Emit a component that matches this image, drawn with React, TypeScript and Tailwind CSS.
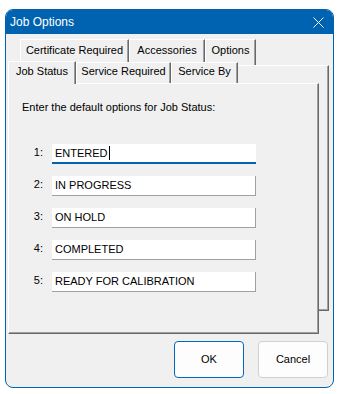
import React from "react";

const font = { fontFamily: '"Liberation Sans", Arial, sans-serif' };

const backTabs = [
  { label: "Certificate Required", w: "w-[109px]" },
  { label: "Accessories", w: "w-[76px]" },
  { label: "Options", w: "w-[51px]" },
];

const statuses = ["ENTERED", "IN PROGRESS", "ON HOLD", "COMPLETED", "READY FOR CALIBRATION"];

function StatusRow({ n, value, focused }: { n: number; value: string; focused?: boolean }) {
  return (
    <div className="flex items-start">
      <div className="w-[35px] pr-[1px] pt-[2px] text-right leading-[13px]">{n}:</div>
      <div
        className={
          focused
            ? "ml-[8px] flex h-[20px] w-[204px] items-center bg-white pl-[3px] border-b-2 border-b-[#0063b1]"
            : "ml-[8px] flex h-[20px] w-[204px] items-center bg-white pl-[3px] border-b border-r border-[#a0a0a0]"
        }
      >
        <span className="leading-[13px]">{value}</span>
        {focused && <span className="ml-[1px] h-[14px] w-px bg-black" />}
      </div>
    </div>
  );
}

export default function App() {
  return (
    <div className="pl-[5px] pt-[9px] text-[11px] text-black" style={font}>
      <div className="flex h-[379px] w-[329px] flex-col overflow-hidden rounded-[8px] border border-[#0063b1] bg-[#f0f0f0]">
        {/* title bar */}
        <div className="flex h-[24px] items-center justify-between bg-[#0063b1] pl-[4px] pr-[9px] text-white">
          <span className="text-[12px] leading-[14px]">Job Options</span>
          <svg width="11" height="11" viewBox="0 0 11 11">
            <path d="M0.5 0.5 L10.5 10.5 M10.5 0.5 L0.5 10.5" stroke="white" strokeWidth="1" />
          </svg>
        </div>

        {/* back tab row */}
        <div className="flex pl-[14px] pt-[5px]">
          {backTabs.map((t) => (
            <div
              key={t.label}
              className={`${t.w} h-[26px] border-l border-t border-white border-r border-r-[#696969] bg-[#f0f0f0] pt-[4px] text-center leading-[13px] shadow-[inset_-1px_0_0_#a0a0a0]`}
            >
              {t.label}
            </div>
          ))}
        </div>

        {/* back page */}
        <div className="ml-[2px] mr-[4px] border-t border-t-white border-r border-b border-r-[#696969] border-b-[#696969] pr-[9px] shadow-[inset_-1px_-1px_0_#a0a0a0]">
          {/* front tab row */}
          <div className="-mt-[5px] flex h-[22px] items-end">
            <div className="relative mb-[-1px] h-[23px] w-[68px] border-l border-t border-white border-r border-r-[#696969] bg-[#f0f0f0] pt-[3px] text-center leading-[13px] shadow-[inset_-1px_0_0_#a0a0a0]">
              Job Status
            </div>
            <div className="h-[21px] w-[95px] border-l border-t border-white border-r border-r-[#696969] bg-[#f0f0f0] pt-[2px] text-center leading-[13px] shadow-[inset_-1px_0_0_#a0a0a0]">
              Service Required
            </div>
            <div className="h-[21px] w-[67px] border-l border-t border-white border-r border-r-[#696969] bg-[#f0f0f0] pt-[2px] text-center leading-[13px] shadow-[inset_-1px_0_0_#a0a0a0]">
              Service By
            </div>
          </div>

          {/* front page */}
          <div className="-mb-[24px] h-[251px] border-l border-t border-white border-r border-b border-r-[#696969] border-b-[#696969] bg-[#f0f0f0] pl-[13px] pt-[17px] shadow-[inset_-1px_-1px_0_#a0a0a0]">
            <div className="leading-[13px]">Enter the default options for Job Status:</div>
            <div className="-ml-[13px] mt-[30px] flex flex-col gap-[12px]">
              {statuses.map((s, i) => (
                <StatusRow key={s} n={i + 1} value={s} focused={i === 0} />
              ))}
            </div>
          </div>
        </div>

        {/* buttons */}
        <div className="mr-[5px] mt-[30px] flex justify-end gap-[14px]">
          <button className="h-[37px] w-[70px] rounded-[4px] border border-[#0067c0] bg-[#fdfdfd] text-[11px] leading-[13px]">
            OK
          </button>
          <button className="h-[37px] w-[70px] rounded-[4px] border border-[#d0d0d0] bg-[#fdfdfd] text-[11px] leading-[13px]">
            Cancel
          </button>
        </div>
      </div>
    </div>
  );
}
